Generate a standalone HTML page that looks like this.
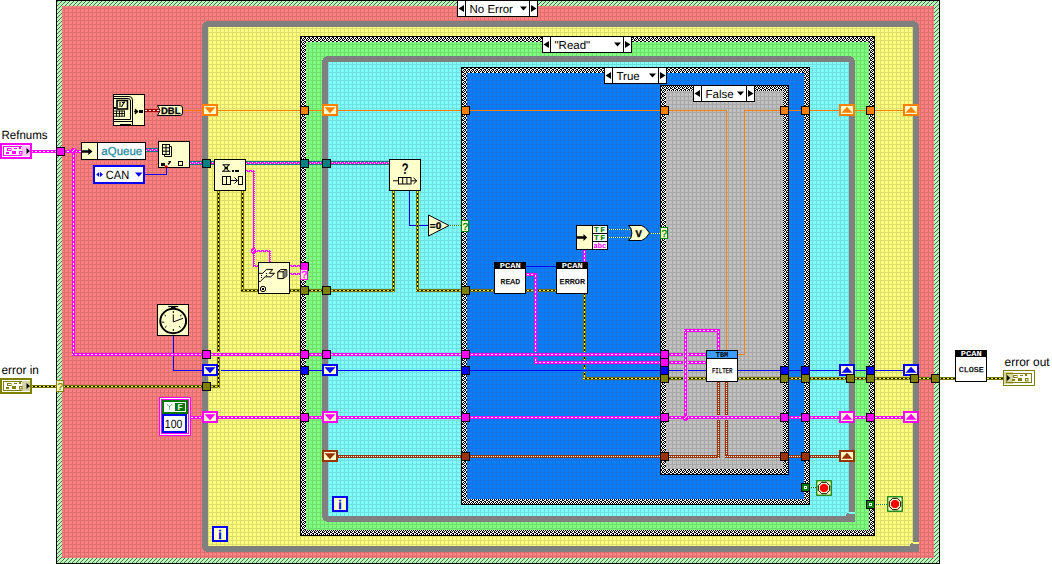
<!DOCTYPE html>
<html lang="en"><head><meta charset="utf-8"><title>Block Diagram</title>
<style>
html,body{margin:0;padding:0;background:#fff;}
body{width:1052px;height:564px;overflow:hidden;font-family:"Liberation Sans",sans-serif;}
svg{display:block;}
</style></head><body>
<svg width="1052" height="564" viewBox="0 0 1052 564" shape-rendering="crispEdges" text-rendering="geometricPrecision">
<defs>
<pattern id="g_red" width="4" height="4" patternUnits="userSpaceOnUse"><rect width="4" height="4" fill="#ff8080"/><rect width="1" height="4" fill="#de6f6f"/><rect width="4" height="1" fill="#de6f6f"/></pattern>
<pattern id="g_yel" width="4" height="4" patternUnits="userSpaceOnUse"><rect width="4" height="4" fill="#ffff80"/><rect width="1" height="4" fill="#dede6f"/><rect width="4" height="1" fill="#dede6f"/></pattern>
<pattern id="g_grn" width="4" height="4" patternUnits="userSpaceOnUse"><rect width="4" height="4" fill="#80ff80"/><rect width="1" height="4" fill="#6fde6f"/><rect width="4" height="1" fill="#6fde6f"/></pattern>
<pattern id="g_cyn" width="4" height="4" patternUnits="userSpaceOnUse"><rect width="4" height="4" fill="#80ffff"/><rect width="1" height="4" fill="#6fdede"/><rect width="4" height="1" fill="#6fdede"/></pattern>
<pattern id="g_blu" width="4" height="4" patternUnits="userSpaceOnUse"><rect width="4" height="4" fill="#0080ff"/><rect width="1" height="4" fill="#1c70e0"/><rect width="4" height="1" fill="#1c70e0"/></pattern>
<pattern id="g_gry" width="4" height="4" patternUnits="userSpaceOnUse"><rect width="4" height="4" fill="#c0c0c0"/><rect width="1" height="4" fill="#a8a8a8"/><rect width="4" height="1" fill="#a8a8a8"/></pattern>
<pattern id="chk" width="4" height="4" patternUnits="userSpaceOnUse" x="1" y="1"><rect width="4" height="4" fill="#000"/><rect x="1" y="0" width="2" height="1" fill="#fff"/><rect x="1" y="1" width="1" height="1" fill="#fff"/><rect x="3" y="1" width="1" height="1" fill="#fff"/><rect x="0" y="2" width="1" height="1" fill="#fff"/><rect x="2" y="2" width="1" height="1" fill="#fff"/><rect x="0" y="3" width="1" height="1" fill="#fff"/><rect x="3" y="3" width="1" height="1" fill="#fff"/></pattern>
<pattern id="hatch" width="4" height="4" patternUnits="userSpaceOnUse"><rect width="4" height="4" fill="#b4ffb4"/><rect x="0" y="2" width="1" height="1" fill="#5e5e66"/><rect x="1" y="1" width="1" height="1" fill="#5e5e66"/><rect x="2" y="0" width="1" height="1" fill="#5e5e66"/><rect x="3" y="3" width="1" height="1" fill="#5e5e66"/></pattern>
</defs>
<rect width="1052" height="564" fill="#fff"/>
<rect x="56" y="0" width="884" height="564" fill="#000" />
<rect x="57" y="1" width="882" height="562" fill="url(#hatch)" />
<rect x="62" y="6" width="872" height="552" fill="url(#g_red)" />
<path d="M206 21H915V22H917V23H918V25H919V552H206V551H204V550H203V548H202V25H203V23H204V22H206Z" fill="#808080"/>
<rect x="208" y="27" width="705" height="519" fill="url(#g_yel)" />
<rect x="911" y="542" width="8" height="2" fill="#ffff80" />
<rect x="910" y="544" width="3" height="3" fill="#808080" />
<rect x="911" y="543" width="2" height="1" fill="#808080" />
<rect x="300" y="36" width="575" height="500" fill="#000" />
<rect x="301" y="37" width="573" height="498" fill="url(#chk)" />
<rect x="306" y="42" width="563" height="488" fill="url(#g_grn)" />
<path d="M326 56H851V57H853V58H854V60H855V522H326V521H324V520H323V518H322V60H323V58H324V57H326Z" fill="#808080"/>
<rect x="328" y="62" width="521" height="454" fill="url(#g_cyn)" />
<rect x="847" y="512" width="8" height="2" fill="#80ffff" />
<rect x="846" y="514" width="3" height="3" fill="#808080" />
<rect x="847" y="513" width="2" height="1" fill="#808080" />
<rect x="461" y="67" width="349" height="438" fill="#000" />
<rect x="462" y="68" width="347" height="436" fill="url(#chk)" />
<rect x="467" y="73" width="337" height="426" fill="url(#g_blu)" />
<rect x="660" y="85" width="129" height="390" fill="#000" />
<rect x="661" y="86" width="127" height="388" fill="url(#chk)" />
<rect x="666" y="91" width="117" height="378" fill="url(#g_gry)" />
<rect x="183" y="110" width="544" height="1" fill="#ff8000" />
<rect x="726" y="110" width="1" height="241" fill="#ff8000" />
<rect x="744" y="110" width="167" height="1" fill="#ff8000" />
<rect x="744" y="110" width="1" height="245" fill="#ff8000" />
<rect x="738" y="354" width="7" height="1" fill="#ff8000" />
<rect x="145" y="109" width="14" height="3" fill="#aa0000" />
<path d="M145 110.5H159" stroke="#fff" stroke-width="1" stroke-dasharray="2 2" fill="none"/>
<rect x="146" y="148" width="12" height="4" fill="#008080" />
<rect x="146" y="149" width="12" height="2" fill="#ff00ff" />
<path d="M146 149.5H158" stroke="#fff" stroke-width="1" stroke-dasharray="1 3" stroke-dashoffset="2" fill="none"/>
<path d="M146 150.5H158" stroke="#fff" stroke-width="1" stroke-dasharray="1 3" stroke-dashoffset="0" fill="none"/>
<rect x="190" y="161" width="24" height="4" fill="#008080" />
<rect x="190" y="162" width="24" height="2" fill="#ff00ff" />
<path d="M190 162.5H214" stroke="#fff" stroke-width="1" stroke-dasharray="1 3" stroke-dashoffset="2" fill="none"/>
<path d="M190 163.5H214" stroke="#fff" stroke-width="1" stroke-dasharray="1 3" stroke-dashoffset="0" fill="none"/>
<rect x="246" y="161" width="143" height="4" fill="#008080" />
<rect x="246" y="162" width="143" height="2" fill="#ff00ff" />
<path d="M246 162.5H389" stroke="#fff" stroke-width="1" stroke-dasharray="1 3" stroke-dashoffset="2" fill="none"/>
<path d="M246 163.5H389" stroke="#fff" stroke-width="1" stroke-dasharray="1 3" stroke-dashoffset="0" fill="none"/>
<rect x="145" y="174" width="22" height="1" fill="#0000ff" />
<rect x="166" y="168" width="1" height="7" fill="#0000ff" />
<rect x="245" y="170" width="10" height="2" fill="#ff00ff" />
<path d="M245 170.5H255" stroke="#fff" stroke-width="1" stroke-dasharray="1 3" stroke-dashoffset="1" fill="none"/>
<path d="M245 171.5H255" stroke="#fff" stroke-width="1" stroke-dasharray="1 3" stroke-dashoffset="3" fill="none"/>
<rect x="253" y="170" width="2" height="97" fill="#ff00ff" />
<path d="M254.5 170V267" stroke="#fff" stroke-width="1" stroke-dasharray="1 1" stroke-dashoffset="0" fill="none"/>
<rect x="253" y="265" width="6" height="2" fill="#ff00ff" />
<path d="M253 265.5H259" stroke="#fff" stroke-width="1" stroke-dasharray="1 3" stroke-dashoffset="1" fill="none"/>
<path d="M253 266.5H259" stroke="#fff" stroke-width="1" stroke-dasharray="1 3" stroke-dashoffset="3" fill="none"/>
<rect x="253" y="250" width="18" height="2" fill="#ff00ff" />
<path d="M253 250.5H271" stroke="#fff" stroke-width="1" stroke-dasharray="1 3" stroke-dashoffset="1" fill="none"/>
<path d="M253 251.5H271" stroke="#fff" stroke-width="1" stroke-dasharray="1 3" stroke-dashoffset="3" fill="none"/>
<rect x="269" y="250" width="2" height="13" fill="#ff00ff" />
<path d="M270.5 250V263" stroke="#fff" stroke-width="1" stroke-dasharray="1 1" stroke-dashoffset="0" fill="none"/>
<rect x="289" y="265" width="13" height="2" fill="#ff00ff" />
<path d="M289 265.5H302" stroke="#fff" stroke-width="1" stroke-dasharray="1 3" stroke-dashoffset="1" fill="none"/>
<path d="M289 266.5H302" stroke="#fff" stroke-width="1" stroke-dasharray="1 3" stroke-dashoffset="3" fill="none"/>
<rect x="289" y="273" width="13" height="2" fill="#ff00ff" />
<path d="M289 273.5H302" stroke="#fff" stroke-width="1" stroke-dasharray="1 3" stroke-dashoffset="1" fill="none"/>
<path d="M289 274.5H302" stroke="#fff" stroke-width="1" stroke-dasharray="1 3" stroke-dashoffset="3" fill="none"/>
<rect x="173" y="336" width="1" height="35" fill="#0000ff" />
<rect x="173" y="370" width="31" height="1" fill="#0000ff" />
<rect x="221" y="370" width="462" height="1" fill="#0000ff" />
<rect x="688" y="370" width="19" height="1" fill="#0000ff" />
<rect x="738" y="370" width="173" height="1" fill="#0000ff" />
<rect x="409" y="191" width="1" height="35" fill="#0000ff" />
<rect x="409" y="225" width="20" height="1" fill="#0000ff" />
<rect x="526" y="266" width="31" height="1" fill="#0000ff" />
<rect x="31" y="385" width="189" height="3" fill="#747400" />
<rect x="31" y="386" width="189" height="1" fill="#ffff00" />
<path d="M31 386.5H220" stroke="#000" stroke-width="1" stroke-dasharray="2 2" stroke-dashoffset="2" fill="none"/>
<rect x="217" y="190" width="3" height="162" fill="#747400" />
<rect x="218" y="190" width="1" height="162" fill="#ffff00" />
<path d="M218.5 190V352" stroke="#000" stroke-width="1" stroke-dasharray="2 2" stroke-dashoffset="1" fill="none"/>
<rect x="217" y="357" width="3" height="31" fill="#747400" />
<rect x="218" y="357" width="1" height="31" fill="#ffff00" />
<path d="M218.5 357V388" stroke="#000" stroke-width="1" stroke-dasharray="2 2" stroke-dashoffset="0" fill="none"/>
<rect x="241" y="190" width="3" height="102" fill="#747400" />
<rect x="242" y="190" width="1" height="102" fill="#ffff00" />
<path d="M242.5 190V292" stroke="#000" stroke-width="1" stroke-dasharray="2 2" stroke-dashoffset="1" fill="none"/>
<rect x="241" y="289" width="19" height="3" fill="#747400" />
<rect x="241" y="290" width="19" height="1" fill="#ffff00" />
<path d="M241 290.5H260" stroke="#000" stroke-width="1" stroke-dasharray="2 2" stroke-dashoffset="0" fill="none"/>
<rect x="289" y="289" width="106" height="3" fill="#747400" />
<rect x="289" y="290" width="106" height="1" fill="#ffff00" />
<path d="M289 290.5H395" stroke="#000" stroke-width="1" stroke-dasharray="2 2" stroke-dashoffset="0" fill="none"/>
<rect x="392" y="190" width="3" height="102" fill="#747400" />
<rect x="393" y="190" width="1" height="102" fill="#ffff00" />
<path d="M393.5 190V292" stroke="#000" stroke-width="1" stroke-dasharray="2 2" stroke-dashoffset="1" fill="none"/>
<rect x="416" y="190" width="3" height="102" fill="#747400" />
<rect x="417" y="190" width="1" height="102" fill="#ffff00" />
<path d="M417.5 190V292" stroke="#000" stroke-width="1" stroke-dasharray="2 2" stroke-dashoffset="1" fill="none"/>
<rect x="416" y="289" width="80" height="3" fill="#747400" />
<rect x="416" y="290" width="80" height="1" fill="#ffff00" />
<path d="M416 290.5H496" stroke="#000" stroke-width="1" stroke-dasharray="2 2" stroke-dashoffset="3" fill="none"/>
<rect x="525" y="289" width="8" height="3" fill="#747400" />
<rect x="525" y="290" width="8" height="1" fill="#ffff00" />
<path d="M525 290.5H533" stroke="#000" stroke-width="1" stroke-dasharray="2 2" stroke-dashoffset="0" fill="none"/>
<rect x="538" y="289" width="20" height="3" fill="#747400" />
<rect x="538" y="290" width="20" height="1" fill="#ffff00" />
<path d="M538 290.5H558" stroke="#000" stroke-width="1" stroke-dasharray="2 2" stroke-dashoffset="1" fill="none"/>
<rect x="583" y="293" width="3" height="59" fill="#747400" />
<rect x="584" y="293" width="1" height="59" fill="#ffff00" />
<path d="M584.5 293V352" stroke="#000" stroke-width="1" stroke-dasharray="2 2" stroke-dashoffset="0" fill="none"/>
<rect x="583" y="357" width="3" height="3" fill="#747400" />
<rect x="584" y="357" width="1" height="3" fill="#ffff00" />
<path d="M584.5 357V360" stroke="#000" stroke-width="1" stroke-dasharray="2 2" stroke-dashoffset="0" fill="none"/>
<rect x="583" y="365" width="3" height="4" fill="#747400" />
<rect x="584" y="365" width="1" height="4" fill="#ffff00" />
<path d="M584.5 365V369" stroke="#000" stroke-width="1" stroke-dasharray="2 2" stroke-dashoffset="0" fill="none"/>
<rect x="583" y="372" width="3" height="8" fill="#747400" />
<rect x="584" y="372" width="1" height="8" fill="#ffff00" />
<path d="M584.5 372V380" stroke="#000" stroke-width="1" stroke-dasharray="2 2" stroke-dashoffset="3" fill="none"/>
<rect x="583" y="377" width="100" height="3" fill="#747400" />
<rect x="583" y="378" width="100" height="1" fill="#ffff00" />
<path d="M583 378.5H683" stroke="#000" stroke-width="1" stroke-dasharray="2 2" stroke-dashoffset="2" fill="none"/>
<rect x="688" y="377" width="20" height="3" fill="#747400" />
<rect x="688" y="378" width="20" height="1" fill="#ffff00" />
<path d="M688 378.5H708" stroke="#000" stroke-width="1" stroke-dasharray="2 2" stroke-dashoffset="3" fill="none"/>
<rect x="737" y="377" width="220" height="3" fill="#747400" />
<rect x="737" y="378" width="220" height="1" fill="#ffff00" />
<path d="M737 378.5H957" stroke="#000" stroke-width="1" stroke-dasharray="2 2" stroke-dashoffset="0" fill="none"/>
<rect x="986" y="377" width="19" height="3" fill="#747400" />
<rect x="986" y="378" width="19" height="1" fill="#ffff00" />
<path d="M986 378.5H1005" stroke="#000" stroke-width="1" stroke-dasharray="2 2" stroke-dashoffset="1" fill="none"/>
<rect x="337" y="455" width="383" height="3" fill="#993300" />
<rect x="337" y="456" width="383" height="1" fill="#993300" />
<path d="M337 456.5H720" stroke="#fff" stroke-width="1" stroke-dasharray="1 1" stroke-dashoffset="0" fill="none"/>
<rect x="717" y="381" width="3" height="34" fill="#993300" />
<rect x="718" y="381" width="1" height="34" fill="#993300" />
<path d="M718.5 381V415" stroke="#fff" stroke-width="1" stroke-dasharray="1 1" stroke-dashoffset="0" fill="none"/>
<rect x="717" y="420" width="3" height="38" fill="#993300" />
<rect x="718" y="420" width="1" height="38" fill="#993300" />
<path d="M718.5 420V458" stroke="#fff" stroke-width="1" stroke-dasharray="1 1" stroke-dashoffset="1" fill="none"/>
<rect x="725" y="381" width="3" height="34" fill="#993300" />
<rect x="726" y="381" width="1" height="34" fill="#993300" />
<path d="M726.5 381V415" stroke="#fff" stroke-width="1" stroke-dasharray="1 1" stroke-dashoffset="0" fill="none"/>
<rect x="725" y="420" width="3" height="38" fill="#993300" />
<rect x="726" y="420" width="1" height="38" fill="#993300" />
<path d="M726.5 420V458" stroke="#fff" stroke-width="1" stroke-dasharray="1 1" stroke-dashoffset="1" fill="none"/>
<rect x="725" y="455" width="117" height="3" fill="#993300" />
<rect x="725" y="456" width="117" height="1" fill="#993300" />
<path d="M725 456.5H842" stroke="#fff" stroke-width="1" stroke-dasharray="1 1" stroke-dashoffset="0" fill="none"/>
<rect x="31" y="150" width="27" height="3" fill="#ff00ff" />
<rect x="31" y="151" width="27" height="1" fill="#ff00ff" />
<path d="M31 151.5H58" stroke="#fff" stroke-width="1" stroke-dasharray="2 2" stroke-dashoffset="0" fill="none"/>
<rect x="64" y="150" width="19" height="3" fill="#ff00ff" />
<rect x="64" y="151" width="19" height="1" fill="#ff00ff" />
<path d="M64 151.5H83" stroke="#fff" stroke-width="1" stroke-dasharray="2 2" stroke-dashoffset="1" fill="none"/>
<rect x="72" y="150" width="3" height="206" fill="#ff00ff" />
<rect x="73" y="150" width="1" height="206" fill="#ff00ff" />
<path d="M73.5 150V356" stroke="#fff" stroke-width="1" stroke-dasharray="2 2" stroke-dashoffset="3" fill="none"/>
<rect x="72" y="353" width="611" height="3" fill="#ff00ff" />
<rect x="72" y="354" width="611" height="1" fill="#ff00ff" />
<path d="M72 354.5H683" stroke="#fff" stroke-width="1" stroke-dasharray="2 2" stroke-dashoffset="1" fill="none"/>
<rect x="688" y="353" width="20" height="3" fill="#ff00ff" />
<rect x="688" y="354" width="20" height="1" fill="#ff00ff" />
<path d="M688 354.5H708" stroke="#fff" stroke-width="1" stroke-dasharray="2 2" stroke-dashoffset="1" fill="none"/>
<rect x="525" y="273" width="12" height="3" fill="#ff00ff" />
<rect x="525" y="274" width="12" height="1" fill="#ff00ff" />
<path d="M525 274.5H537" stroke="#fff" stroke-width="1" stroke-dasharray="2 2" stroke-dashoffset="2" fill="none"/>
<rect x="534" y="273" width="3" height="79" fill="#ff00ff" />
<rect x="535" y="273" width="1" height="79" fill="#ff00ff" />
<path d="M535.5 273V352" stroke="#fff" stroke-width="1" stroke-dasharray="2 2" stroke-dashoffset="2" fill="none"/>
<rect x="534" y="357" width="3" height="7" fill="#ff00ff" />
<rect x="535" y="357" width="1" height="7" fill="#ff00ff" />
<path d="M535.5 357V364" stroke="#fff" stroke-width="1" stroke-dasharray="2 2" stroke-dashoffset="2" fill="none"/>
<rect x="534" y="361" width="149" height="3" fill="#ff00ff" />
<rect x="534" y="362" width="149" height="1" fill="#ff00ff" />
<path d="M534 362.5H683" stroke="#fff" stroke-width="1" stroke-dasharray="2 2" stroke-dashoffset="3" fill="none"/>
<rect x="688" y="361" width="20" height="3" fill="#ff00ff" />
<rect x="688" y="362" width="20" height="1" fill="#ff00ff" />
<path d="M688 362.5H708" stroke="#fff" stroke-width="1" stroke-dasharray="2 2" stroke-dashoffset="1" fill="none"/>
<rect x="583" y="249" width="3" height="15" fill="#ff00ff" />
<rect x="584" y="249" width="1" height="15" fill="#ff00ff" />
<path d="M584.5 249V264" stroke="#fff" stroke-width="1" stroke-dasharray="2 2" stroke-dashoffset="2" fill="none"/>
<rect x="684" y="329" width="3" height="90" fill="#ff00ff" />
<rect x="685" y="329" width="1" height="90" fill="#ff00ff" />
<path d="M685.5 329V419" stroke="#fff" stroke-width="1" stroke-dasharray="2 2" stroke-dashoffset="2" fill="none"/>
<rect x="684" y="329" width="36" height="3" fill="#ff00ff" />
<rect x="684" y="330" width="36" height="1" fill="#ff00ff" />
<path d="M684 330.5H720" stroke="#fff" stroke-width="1" stroke-dasharray="2 2" stroke-dashoffset="1" fill="none"/>
<rect x="717" y="329" width="3" height="23" fill="#ff00ff" />
<rect x="718" y="329" width="1" height="23" fill="#ff00ff" />
<path d="M718.5 329V352" stroke="#fff" stroke-width="1" stroke-dasharray="2 2" stroke-dashoffset="2" fill="none"/>
<rect x="190" y="416" width="722" height="3" fill="#ff00ff" />
<rect x="190" y="417" width="722" height="1" fill="#ff00ff" />
<path d="M190 417.5H912" stroke="#fff" stroke-width="1" stroke-dasharray="2 2" stroke-dashoffset="3" fill="none"/>
<path d="M449.5 225.5 L461.5 225.5" fill="none" stroke="#f4fff4" stroke-width="1" />
<path d="M449.5 225.5 L461.5 225.5" fill="none" stroke="#007f00" stroke-width="1" stroke-dasharray="1 1" />
<path d="M607.5 229.5 L631.5 229.5" fill="none" stroke="#f4fff4" stroke-width="1" />
<path d="M607.5 229.5 L631.5 229.5" fill="none" stroke="#007f00" stroke-width="1" stroke-dasharray="1 1" />
<path d="M607.5 237.5 L631.5 237.5" fill="none" stroke="#f4fff4" stroke-width="1" />
<path d="M607.5 237.5 L631.5 237.5" fill="none" stroke="#007f00" stroke-width="1" stroke-dasharray="1 1" />
<path d="M649.5 233.5 L661.5 233.5" fill="none" stroke="#f4fff4" stroke-width="1" />
<path d="M649.5 233.5 L661.5 233.5" fill="none" stroke="#007f00" stroke-width="1" stroke-dasharray="1 1" />
<path d="M810.5 487.5 L816.5 487.5" fill="none" stroke="#f4fff4" stroke-width="1" />
<path d="M810.5 487.5 L816.5 487.5" fill="none" stroke="#007f00" stroke-width="1" stroke-dasharray="1 1" />
<path d="M875.5 504.5 L887.5 504.5" fill="none" stroke="#f4fff4" stroke-width="1" />
<path d="M875.5 504.5 L887.5 504.5" fill="none" stroke="#007f00" stroke-width="1" stroke-dasharray="1 1" />
<rect x="72" y="148" width="3" height="1" fill="#ff00ff" />
<rect x="71" y="149" width="5" height="4" fill="#ff00ff" />
<rect x="72" y="153" width="3" height="1" fill="#ff00ff" />
<rect x="72" y="151" width="1" height="1" fill="#fff" />
<rect x="73" y="150" width="1" height="1" fill="#fff" />
<rect x="74" y="149" width="1" height="1" fill="#fff" />
<rect x="252" y="248" width="3" height="1" fill="#ff00ff" />
<rect x="251" y="249" width="5" height="4" fill="#ff00ff" />
<rect x="252" y="253" width="3" height="1" fill="#ff00ff" />
<rect x="252" y="251" width="1" height="1" fill="#fff" />
<rect x="253" y="250" width="1" height="1" fill="#fff" />
<rect x="254" y="249" width="1" height="1" fill="#fff" />
<rect x="684" y="415" width="3" height="1" fill="#ff00ff" />
<rect x="683" y="416" width="5" height="4" fill="#ff00ff" />
<rect x="684" y="420" width="3" height="1" fill="#ff00ff" />
<rect x="684" y="418" width="1" height="1" fill="#fff" />
<rect x="685" y="417" width="1" height="1" fill="#fff" />
<rect x="686" y="416" width="1" height="1" fill="#fff" />
<rect x="300.5" y="106.5" width="8" height="8" fill="#ff8000" stroke="#000" stroke-width="1" />
<rect x="461.5" y="106.5" width="8" height="8" fill="#ff8000" stroke="#000" stroke-width="1" />
<rect x="660.5" y="106.5" width="8" height="8" fill="#ff8000" stroke="#000" stroke-width="1" />
<rect x="780.5" y="106.5" width="8" height="8" fill="#ff8000" stroke="#000" stroke-width="1" />
<rect x="801.5" y="106.5" width="8" height="8" fill="#ff8000" stroke="#000" stroke-width="1" />
<rect x="866.5" y="106.5" width="8" height="8" fill="#ff8000" stroke="#000" stroke-width="1" />
<rect x="202" y="104" width="16" height="12" fill="#ff8000" />
<rect x="204" y="106" width="12" height="8" fill="#ffffcc" />
<path d="M204.5 107.3H215.5L210.0 113.3Z" fill="#ff8000" shape-rendering="auto"/>
<rect x="322" y="104" width="16" height="12" fill="#ff8000" />
<rect x="324" y="106" width="12" height="8" fill="#ffffcc" />
<path d="M324.5 107.3H335.5L330.0 113.3Z" fill="#ff8000" shape-rendering="auto"/>
<rect x="839" y="104" width="16" height="12" fill="#ff8000" />
<rect x="841" y="106" width="12" height="8" fill="#ffffcc" />
<path d="M841.5 112.7H852.5L847.0 106.7Z" fill="#ff8000" shape-rendering="auto"/>
<rect x="903" y="104" width="16" height="12" fill="#ff8000" />
<rect x="905" y="106" width="12" height="8" fill="#ffffcc" />
<path d="M905.5 112.7H916.5L911.0 106.7Z" fill="#ff8000" shape-rendering="auto"/>
<rect x="202.5" y="159.5" width="8" height="8" fill="#008080" stroke="#000" stroke-width="1" />
<rect x="300.5" y="159.5" width="8" height="8" fill="#008080" stroke="#000" stroke-width="1" />
<rect x="322.5" y="159.5" width="8" height="8" fill="#008080" stroke="#000" stroke-width="1" />
<rect x="56.5" y="147.5" width="8" height="8" fill="#ff00ff" stroke="#000" stroke-width="1" />
<rect x="202.5" y="350.5" width="8" height="8" fill="#ff00ff" stroke="#000" stroke-width="1" />
<rect x="300.5" y="350.5" width="8" height="8" fill="#ff00ff" stroke="#000" stroke-width="1" />
<rect x="322.5" y="350.5" width="8" height="8" fill="#ff00ff" stroke="#000" stroke-width="1" />
<rect x="461.5" y="350.5" width="8" height="8" fill="#ff00ff" stroke="#000" stroke-width="1" />
<rect x="660.5" y="350.5" width="8" height="8" fill="#ff00ff" stroke="#000" stroke-width="1" />
<rect x="660.5" y="358.5" width="8" height="8" fill="#ff00ff" stroke="#000" stroke-width="1" />
<rect x="202" y="364" width="16" height="12" fill="#0000ff" />
<rect x="204" y="366" width="12" height="8" fill="#ffffcc" />
<path d="M204.5 367.3H215.5L210.0 373.3Z" fill="#0000ff" shape-rendering="auto"/>
<rect x="322" y="364" width="16" height="12" fill="#0000ff" />
<rect x="324" y="366" width="12" height="8" fill="#ffffcc" />
<path d="M324.5 367.3H335.5L330.0 373.3Z" fill="#0000ff" shape-rendering="auto"/>
<rect x="839" y="364" width="16" height="12" fill="#0000ff" />
<rect x="841" y="366" width="12" height="8" fill="#ffffcc" />
<path d="M841.5 372.7H852.5L847.0 366.7Z" fill="#0000ff" shape-rendering="auto"/>
<rect x="903" y="364" width="16" height="12" fill="#0000ff" />
<rect x="905" y="366" width="12" height="8" fill="#ffffcc" />
<path d="M905.5 372.7H916.5L911.0 366.7Z" fill="#0000ff" shape-rendering="auto"/>
<rect x="300.5" y="366.5" width="8" height="8" fill="#0000ff" stroke="#000" stroke-width="1" />
<rect x="461.5" y="366.5" width="8" height="8" fill="#0000ff" stroke="#000" stroke-width="1" />
<rect x="660.5" y="366.5" width="8" height="8" fill="#0000ff" stroke="#000" stroke-width="1" />
<rect x="780.5" y="366.5" width="8" height="8" fill="#0000ff" stroke="#000" stroke-width="1" />
<rect x="801.5" y="366.5" width="8" height="8" fill="#0000ff" stroke="#000" stroke-width="1" />
<rect x="866.5" y="366.5" width="8" height="8" fill="#0000ff" stroke="#000" stroke-width="1" />
<rect x="202.5" y="382.5" width="8" height="8" fill="#808000" stroke="#000" stroke-width="1" />
<rect x="300.5" y="286.5" width="8" height="8" fill="#808000" stroke="#000" stroke-width="1" />
<rect x="322.5" y="286.5" width="8" height="8" fill="#808000" stroke="#000" stroke-width="1" />
<rect x="461.5" y="286.5" width="8" height="8" fill="#808000" stroke="#000" stroke-width="1" />
<rect x="660.5" y="374.5" width="8" height="8" fill="#808000" stroke="#000" stroke-width="1" />
<rect x="780.5" y="374.5" width="8" height="8" fill="#808000" stroke="#000" stroke-width="1" />
<rect x="801.5" y="374.5" width="8" height="8" fill="#808000" stroke="#000" stroke-width="1" />
<rect x="846.5" y="374.5" width="8" height="8" fill="#808000" stroke="#000" stroke-width="1" />
<rect x="866.5" y="374.5" width="8" height="8" fill="#808000" stroke="#000" stroke-width="1" />
<rect x="910.5" y="374.5" width="8" height="8" fill="#808000" stroke="#000" stroke-width="1" />
<rect x="931.5" y="374.5" width="8" height="8" fill="#808000" stroke="#000" stroke-width="1" />
<rect x="300.5" y="413.5" width="8" height="8" fill="#ff00ff" stroke="#000" stroke-width="1" />
<rect x="461.5" y="413.5" width="8" height="8" fill="#ff00ff" stroke="#000" stroke-width="1" />
<rect x="660.5" y="413.5" width="8" height="8" fill="#ff00ff" stroke="#000" stroke-width="1" />
<rect x="780.5" y="413.5" width="8" height="8" fill="#ff00ff" stroke="#000" stroke-width="1" />
<rect x="801.5" y="413.5" width="8" height="8" fill="#ff00ff" stroke="#000" stroke-width="1" />
<rect x="866.5" y="413.5" width="8" height="8" fill="#ff00ff" stroke="#000" stroke-width="1" />
<rect x="202" y="411" width="16" height="12" fill="#ff00ff" />
<rect x="204" y="413" width="12" height="8" fill="#ffffcc" />
<path d="M204.5 414.3H215.5L210.0 420.3Z" fill="#ff00ff" shape-rendering="auto"/>
<rect x="322" y="411" width="16" height="12" fill="#ff00ff" />
<rect x="324" y="413" width="12" height="8" fill="#ffffcc" />
<path d="M324.5 414.3H335.5L330.0 420.3Z" fill="#ff00ff" shape-rendering="auto"/>
<rect x="839" y="411" width="16" height="12" fill="#ff00ff" />
<rect x="841" y="413" width="12" height="8" fill="#ffffcc" />
<path d="M841.5 419.7H852.5L847.0 413.7Z" fill="#ff00ff" shape-rendering="auto"/>
<rect x="903" y="411" width="16" height="12" fill="#ff00ff" />
<rect x="905" y="413" width="12" height="8" fill="#ffffcc" />
<path d="M905.5 419.7H916.5L911.0 413.7Z" fill="#ff00ff" shape-rendering="auto"/>
<rect x="461.5" y="452.5" width="8" height="8" fill="#993300" stroke="#000" stroke-width="1" />
<rect x="660.5" y="452.5" width="8" height="8" fill="#993300" stroke="#000" stroke-width="1" />
<rect x="780.5" y="452.5" width="8" height="8" fill="#993300" stroke="#000" stroke-width="1" />
<rect x="801.5" y="452.5" width="8" height="8" fill="#993300" stroke="#000" stroke-width="1" />
<rect x="322" y="450" width="16" height="12" fill="#993300" />
<rect x="324" y="452" width="12" height="8" fill="#ffffcc" />
<path d="M324.5 453.3H335.5L330.0 459.3Z" fill="#993300" shape-rendering="auto"/>
<rect x="839" y="450" width="16" height="12" fill="#993300" />
<rect x="841" y="452" width="12" height="8" fill="#ffffcc" />
<path d="M841.5 458.7H852.5L847.0 452.7Z" fill="#993300" shape-rendering="auto"/>
<rect x="300.5" y="262.5" width="8" height="8" fill="#ff00ff" stroke="#000" stroke-width="1" />
<rect x="801.5" y="483.5" width="8" height="8" fill="#008000" stroke="#000" stroke-width="1" />
<rect x="804" y="486" width="3" height="3" fill="#fff" />
<rect x="805" y="487" width="1" height="1" fill="#008000" />
<rect x="866.5" y="500.5" width="8" height="8" fill="#008000" stroke="#000" stroke-width="1" />
<rect x="869" y="503" width="3" height="3" fill="#fff" />
<rect x="870" y="504" width="1" height="1" fill="#008000" />
<rect x="56.5" y="380.5" width="7" height="11" fill="#ffffcc" stroke="#808000" stroke-width="1" />
<text x="60.2" y="389.8" font-size="10" fill="#808000" text-anchor="middle" font-weight="normal" font-family="'Liberation Sans', sans-serif" stroke="#808000" stroke-width="0.3">?</text>
<rect x="300.5" y="269.5" width="7" height="10" fill="#ffffcc" stroke="#ff00ff" stroke-width="1" />
<text x="304.2" y="277.8" font-size="10" fill="#ff00ff" text-anchor="middle" font-weight="normal" font-family="'Liberation Sans', sans-serif" stroke="#ff00ff" stroke-width="0.3">?</text>
<rect x="461.5" y="220.5" width="7" height="11" fill="#ffffcc" stroke="#007f00" stroke-width="1" />
<text x="465.2" y="229.8" font-size="10" fill="#007f00" text-anchor="middle" font-weight="normal" font-family="'Liberation Sans', sans-serif" stroke="#007f00" stroke-width="0.3">?</text>
<rect x="660.5" y="227.5" width="7" height="11" fill="#ffffcc" stroke="#007f00" stroke-width="1" />
<text x="664.2" y="236.8" font-size="10" fill="#007f00" text-anchor="middle" font-weight="normal" font-family="'Liberation Sans', sans-serif" stroke="#007f00" stroke-width="0.3">?</text>
<rect x="457.5" y="0.5" width="80" height="16" fill="#fff" stroke="#000" stroke-width="1" />
<path d="M465.5 0V17M529.5 0V17" stroke="#000" stroke-width="1" fill="none"/>
<path d="M458.5 8.5L464 5.0V12.0Z" fill="#000" shape-rendering="auto"/>
<path d="M536.5 8.5L531 5.0V12.0Z" fill="#000" shape-rendering="auto"/>
<path d="M520 6.5h7l-3.5 4Z" fill="#000" shape-rendering="auto"/>
<text x="469.5" y="13" font-size="11.5" fill="#000" text-anchor="start" font-weight="normal" font-family="'Liberation Sans', sans-serif" >No Error</text>
<rect x="542.5" y="36.5" width="89" height="16" fill="#fff" stroke="#000" stroke-width="1" />
<path d="M550.5 36V53M623.5 36V53" stroke="#000" stroke-width="1" fill="none"/>
<path d="M543.5 44.5L549 41.0V48.0Z" fill="#000" shape-rendering="auto"/>
<path d="M630.5 44.5L625 41.0V48.0Z" fill="#000" shape-rendering="auto"/>
<path d="M614 42.5h7l-3.5 4Z" fill="#000" shape-rendering="auto"/>
<text x="554.5" y="49" font-size="11.5" fill="#000" text-anchor="start" font-weight="normal" font-family="'Liberation Sans', sans-serif" >&quot;Read&quot;</text>
<rect x="604.5" y="67.5" width="62" height="16" fill="#fff" stroke="#000" stroke-width="1" />
<path d="M612.5 67V84M658.5 67V84" stroke="#000" stroke-width="1" fill="none"/>
<path d="M605.5 75.5L611 72.0V79.0Z" fill="#000" shape-rendering="auto"/>
<path d="M665.5 75.5L660 72.0V79.0Z" fill="#000" shape-rendering="auto"/>
<path d="M649 73.5h7l-3.5 4Z" fill="#000" shape-rendering="auto"/>
<text x="616.5" y="80" font-size="11.5" fill="#000" text-anchor="start" font-weight="normal" font-family="'Liberation Sans', sans-serif" >True</text>
<rect x="693.5" y="85.5" width="61" height="16" fill="#fff" stroke="#000" stroke-width="1" />
<path d="M701.5 85V102M746.5 85V102" stroke="#000" stroke-width="1" fill="none"/>
<path d="M694.5 93.5L700 90.0V97.0Z" fill="#000" shape-rendering="auto"/>
<path d="M753.5 93.5L748 90.0V97.0Z" fill="#000" shape-rendering="auto"/>
<path d="M737 91.5h7l-3.5 4Z" fill="#000" shape-rendering="auto"/>
<text x="705.5" y="98" font-size="11.5" fill="#000" text-anchor="start" font-weight="normal" font-family="'Liberation Sans', sans-serif" >False</text>
<rect x="113.5" y="94.5" width="31" height="31" fill="#ffffcc" stroke="#000" stroke-width="1" />
<g fill="none" stroke="#000" stroke-width="1" shape-rendering="auto"><path d="M113.500 96.500H129Q132.500 96.500 132.500 100V125.500"/><path d="M113.500 98.500H128Q130.500 98.500 130.500 101V119.500H113.500"/><path d="M113.500 121.500H132.500"/><rect x="117" y="100.500" width="10.500" height="8.500" stroke-width="1.600"/><path d="M120 102V107M124.500 101.500L121.500 107M122 102.500H125" stroke-width="1.100"/><path d="M114 111H124.500M114 113.500H124.500M114 116.200H124.500M116.500 110.500V116.500M119.500 110.500V116.500M122 110.500V116.500M124.500 110.500V116.500" stroke-width="0.900"/><path d="M120 124.800H131" stroke-width="1.600"/></g>
<rect x="114" y="107" width="2" height="2" fill="#000" />
<path d="M134 111.500H137M135.200 109L138.200 111.500L135.200 114Z" stroke="#000" fill="#000" stroke-width="0.800" shape-rendering="auto"/>
<rect x="139" y="110" width="4" height="3" fill="#000" />
<path d="M157.500 105.500H180Q182.500 105.500 182.500 108V113Q182.500 115.500 180 115.500H157.500L160 110.500Z" fill="#ffffcc" stroke="#000" shape-rendering="auto"/>
<text x="170.7" y="114.2" font-size="9.5" fill="#000" text-anchor="middle" font-weight="bold" font-family="'Liberation Sans', sans-serif" stroke="#000" stroke-width="0.3">DBL</text>
<text x="1.5" y="138.5" font-size="12" fill="#000" text-anchor="start" font-weight="normal" font-family="'Liberation Sans', sans-serif" textLength="46" lengthAdjust="spacingAndGlyphs">Refnums</text>
<rect x="0" y="143" width="32" height="16" fill="#ff00ff" />
<rect x="2" y="145" width="28" height="12" fill="#fff" />
<rect x="3.5" y="146.5" width="25" height="9" fill="#fff" stroke="#ff00ff" stroke-width="1" />
<rect x="22" y="146" width="8" height="10" fill="#ffc4ff" />
<path d="M26.5 148.0L30 151.0L26.5 154.0Z" fill="#000" shape-rendering="auto"/>
<rect x="7.5" y="148.5" width="3.5" height="2" fill="none" stroke="#ff00ff" stroke-width="1" shape-rendering="auto"/>
<rect x="14" y="148" width="3" height="1" fill="#ff00ff" />
<rect x="19" y="147" width="2" height="2" fill="#ff00ff" />
<rect x="6" y="152" width="3" height="2" fill="#ff00ff" />
<rect x="12" y="151" width="4" height="3" fill="#ff00ff" />
<rect x="19.5" y="151.5" width="2.5" height="2.5" fill="none" stroke="#ff00ff" stroke-width="1" shape-rendering="auto"/>
<rect x="81.5" y="142.5" width="64" height="17" fill="#fff" stroke="#000" stroke-width="1" />
<rect x="82" y="143" width="15" height="16" fill="#ffffcc" />
<rect x="97" y="142" width="1" height="18" fill="#000" />
<path d="M82 150.300H88.300V148L92.500 151.500L88.300 155V152.700H82Z" fill="#000" shape-rendering="auto"/>
<text x="101.3" y="155" font-size="11.5" fill="#1f8a9e" text-anchor="start" font-weight="normal" font-family="'Liberation Sans', sans-serif" stroke="#1f8a9e" stroke-width="0.25">aQueue</text>
<rect x="93" y="165" width="52" height="19" fill="#0000ff" />
<rect x="95" y="167" width="48" height="15" fill="#fff" />
<path d="M96.2 174.500L99.2 172V177ZM103 174.500L100 172V177Z" fill="#0000ff" shape-rendering="auto"/>
<text x="105.8" y="178.8" font-size="12" fill="#000" text-anchor="start" font-weight="normal" font-family="'Liberation Sans', sans-serif" textLength="23.5" lengthAdjust="spacingAndGlyphs">CAN</text>
<path d="M135 172.500H142.500L138.750 176.800Z" fill="#0000ff" shape-rendering="auto"/>
<rect x="158.5" y="141.5" width="31" height="26" fill="#ffffcc" stroke="#000" stroke-width="1" />
<g fill="none" stroke="#000" stroke-width="1" shape-rendering="auto"><rect x="162.500" y="144.500" width="7" height="10"/><path d="M166 144.500V154.500M162.500 147.800H169.500M162.500 151.200H169.500"/><path d="M170 146.500H171.500V156.500H164.500V155"/><rect x="178.500" y="161.500" width="4" height="4"/><path d="M168 164.500L170.500 161.500M168.500 161.500H171" stroke-width="1.2"/></g>
<rect x="161" y="163" width="4" height="3" fill="#000" />
<path d="M163.800 167.500L166.200 164.800L168.600 167.500Z" fill="#e00000" shape-rendering="auto"/>
<rect x="214.5" y="159.5" width="31" height="31" fill="#ffffcc" stroke="#000" stroke-width="1" />
<g fill="none" stroke="#000" stroke-width="1" shape-rendering="auto"><path d="M222.500 164.800H230M222 171.200H230.500" stroke-width="1.100"/><path d="M223.500 165L228.800 171M228.800 165L223.500 171" stroke-width="1.100"/><path d="M224.500 168H228" stroke-width="1.800"/><rect x="222.500" y="176.500" width="8" height="8"/><path d="M226.500 176.500V184.500"/><rect x="238.500" y="176.500" width="4" height="8"/><path d="M231 180.500H237M234.500 177.500L237.500 180.500L234.500 183.500"/></g>
<rect x="232" y="170" width="2" height="2" fill="#000" />
<rect x="234.5" y="170" width="2" height="2" fill="#000" />
<rect x="237" y="170" width="2" height="2" fill="#000" />
<rect x="258.5" y="262.5" width="31" height="31" fill="#ffffcc" stroke="#000" stroke-width="1" />
<g fill="none" stroke="#000" stroke-width="1" shape-rendering="auto"><path d="M259 273.300H262.800L266.400 269.400H272.800L269.300 273.300H274.600L270.700 276.800H265L260.400 281.400H259"/><path d="M277.800 271.800H283.200V278.600H277.800ZM277.800 271.800L280.800 269.500H286.500L283.200 271.800M286.800 269.800V276L283.200 278.600"/><circle cx="263" cy="289" r="2.700"/></g>
<path d="M283.700 272L286.500 270V275.800L283.700 278Z" fill="#777" shape-rendering="auto"/>
<rect x="262" y="288" width="2" height="2" fill="#000" />
<rect x="261" y="275" width="1" height="1" fill="#000" />
<rect x="261" y="277" width="1" height="1" fill="#000" />
<rect x="266" y="273" width="1" height="1" fill="#000" />
<rect x="266" y="275" width="1" height="1" fill="#000" />
<rect x="157.5" y="304.5" width="31" height="31" fill="#ffffcc" stroke="#000" stroke-width="1" />
<g fill="none" stroke="#000" shape-rendering="auto"><ellipse cx="173.200" cy="321" rx="12.900" ry="12.200" stroke-width="2"/><path d="M173.300 322V314.500M173.300 322L183 318.300" stroke-width="1"/><path d="M168.200 306.500H178.200" stroke-width="1.200"/><path d="M171 307.500H175.500" stroke-width="2"/><path d="M173.300 311V313M173.300 329V331M162 322.200H164.200M164.500 315L166 316.200M181.500 315L180 316.200M165 327.500L166.500 326.200M180.500 327.500L179 326.200" stroke-width="1"/></g>
<text x="1.5" y="373.8" font-size="12" fill="#000" text-anchor="start" font-weight="normal" font-family="'Liberation Sans', sans-serif" textLength="37.3" lengthAdjust="spacingAndGlyphs">error in</text>
<rect x="0" y="378" width="32" height="16" fill="#808000" />
<rect x="2" y="380" width="28" height="12" fill="#fff" />
<rect x="3.5" y="381.5" width="25" height="9" fill="#fff" stroke="#808000" stroke-width="1" />
<rect x="22" y="381" width="8" height="10" fill="#d4d4a4" />
<path d="M26.5 383.0L30 386.0L26.5 389.0Z" fill="#000" shape-rendering="auto"/>
<rect x="7.5" y="383.5" width="3.5" height="2" fill="none" stroke="#808000" stroke-width="1" shape-rendering="auto"/>
<rect x="14" y="383" width="3" height="1" fill="#808000" />
<rect x="19" y="382" width="2" height="2" fill="#808000" />
<rect x="6" y="387" width="3" height="2" fill="#808000" />
<rect x="12" y="386" width="4" height="3" fill="#808000" />
<rect x="19.5" y="386.5" width="2.5" height="2.5" fill="none" stroke="#808000" stroke-width="1" shape-rendering="auto"/>
<rect x="159.5" y="397.5" width="31" height="38" fill="#fff" stroke="#ff00ff" stroke-width="1" />
<rect x="161.5" y="399.5" width="27" height="34" fill="#fff" stroke="#ff00ff" stroke-width="1" />
<rect x="162" y="400" width="26" height="14" fill="#007800" />
<rect x="164" y="402" width="22" height="10" fill="#fff" />
<rect x="175" y="403" width="10" height="8" fill="#007800" />
<text x="180" y="410.2" font-size="8.5" fill="#fff" text-anchor="middle" font-weight="bold" font-family="'Liberation Sans', sans-serif" >F</text>
<path d="M167 404.500L169.500 406.500M172 404.500L169.500 406.500M169.500 406.500V410" stroke="#007800" stroke-dasharray="1 1" fill="none" shape-rendering="auto"/>
<rect x="162" y="414" width="25" height="19" fill="#0000ff" />
<rect x="164" y="416" width="21" height="15" fill="#fff" />
<text x="164.8" y="427.8" font-size="12" fill="#000" text-anchor="start" font-weight="normal" font-family="'Liberation Sans', sans-serif" textLength="17.5" lengthAdjust="spacingAndGlyphs">100</text>
<rect x="212" y="526" width="16" height="16" fill="#0000ff" />
<rect x="214" y="528" width="12" height="12" fill="#ffffcc" />
<text x="220" y="539" font-size="12.5" fill="#0000ff" text-anchor="middle" font-weight="bold" font-family="'Liberation Sans', sans-serif" stroke="#0000ff" stroke-width="0.3">i</text>
<rect x="332" y="496" width="16" height="16" fill="#0000ff" />
<rect x="334" y="498" width="12" height="12" fill="#ffffcc" />
<text x="340" y="509" font-size="12.5" fill="#0000ff" text-anchor="middle" font-weight="bold" font-family="'Liberation Sans', sans-serif" stroke="#0000ff" stroke-width="0.3">i</text>
<rect x="389.5" y="159.5" width="31" height="31" fill="#ffffcc" stroke="#000" stroke-width="1" />
<text x="405.2" y="173.8" font-size="15.5" fill="#000" text-anchor="middle" font-weight="bold" font-family="'Liberation Sans', sans-serif" textLength="6.8" lengthAdjust="spacingAndGlyphs">?</text>
<g fill="none" stroke="#000" stroke-width="1" shape-rendering="auto"><rect x="398.500" y="177.500" width="12.500" height="6.500"/><path d="M402.700 177.500V184M406.900 177.500V184"/><path d="M393 180.800H398.500M411 180.800H416.500M413.500 177.800L416.800 180.800L413.500 183.800"/></g>
<path d="M428.500 215L449 225.500L428.500 236Z" fill="#ffffcc" stroke="#000" shape-rendering="auto"/>
<text x="429.8" y="229" font-size="9.5" fill="#000" text-anchor="start" font-weight="bold" font-family="'Liberation Sans', sans-serif" textLength="11.4" lengthAdjust="spacingAndGlyphs" stroke="#000" stroke-width="0.35">=0</text>
<rect x="494.5" y="262.5" width="31" height="31" fill="#fff" stroke="#000" stroke-width="1" />
<rect x="494.5" y="262.5" width="31" height="6" fill="#000" stroke="#000" stroke-width="1" />
<text x="510.2" y="268.2" font-size="7.5" fill="#fff" text-anchor="middle" font-weight="bold" font-family="'Liberation Mono', sans-serif" textLength="21" lengthAdjust="spacingAndGlyphs">PCAN</text>
<text x="510.3" y="284" font-size="7.5" fill="#000" text-anchor="middle" font-weight="normal" font-family="'Liberation Mono', sans-serif" textLength="19.5" lengthAdjust="spacingAndGlyphs" stroke="#000" stroke-width="0.25">READ</text>
<rect x="556.5" y="262.5" width="31" height="31" fill="#fff" stroke="#000" stroke-width="1" />
<rect x="556.5" y="262.5" width="31" height="6" fill="#000" stroke="#000" stroke-width="1" />
<text x="572.2" y="268.2" font-size="7.5" fill="#fff" text-anchor="middle" font-weight="bold" font-family="'Liberation Mono', sans-serif" textLength="21" lengthAdjust="spacingAndGlyphs">PCAN</text>
<text x="572.3" y="284" font-size="7.5" fill="#000" text-anchor="middle" font-weight="normal" font-family="'Liberation Mono', sans-serif" textLength="25.5" lengthAdjust="spacingAndGlyphs" stroke="#000" stroke-width="0.25">ERROR</text>
<rect x="955.5" y="350.5" width="31" height="31" fill="#fff" stroke="#000" stroke-width="1" />
<rect x="955.5" y="350.5" width="31" height="6" fill="#000" stroke="#000" stroke-width="1" />
<text x="971.2" y="356.2" font-size="7.5" fill="#fff" text-anchor="middle" font-weight="bold" font-family="'Liberation Mono', sans-serif" textLength="21" lengthAdjust="spacingAndGlyphs">PCAN</text>
<text x="971.3" y="372" font-size="7.5" fill="#000" text-anchor="middle" font-weight="normal" font-family="'Liberation Mono', sans-serif" textLength="25" lengthAdjust="spacingAndGlyphs" stroke="#000" stroke-width="0.25">CLOSE</text>
<rect x="706.5" y="350.5" width="31" height="31" fill="#fff" stroke="#000" stroke-width="1" />
<rect x="706.5" y="350.5" width="31" height="8" fill="#3c9cff" stroke="#000" stroke-width="1" />
<text x="722" y="357.3" font-size="7.5" fill="#000" text-anchor="middle" font-weight="bold" font-family="'Liberation Mono', sans-serif" textLength="12.5" lengthAdjust="spacingAndGlyphs">TBM</text>
<text x="722.2" y="373" font-size="7.5" fill="#000" text-anchor="middle" font-weight="normal" font-family="'Liberation Mono', sans-serif" textLength="20.5" lengthAdjust="spacingAndGlyphs" stroke="#000" stroke-width="0.25">FILTER</text>
<rect x="576.5" y="225.5" width="31" height="24" fill="#fff" stroke="#000" stroke-width="1" />
<rect x="577" y="226" width="15" height="23" fill="#ffffcc" />
<rect x="592" y="225" width="1" height="25" fill="#000" />
<path d="M577 236.300H583.500V234L587.200 237.500L583.500 241V238.700H577Z" fill="#000" shape-rendering="auto"/>
<rect x="593" y="233" width="14" height="1" fill="#000" />
<rect x="593" y="241" width="14" height="1" fill="#000" />
<text x="594.3" y="231.7" font-size="7" fill="#007f00" text-anchor="start" font-weight="bold" font-family="'Liberation Sans', sans-serif" textLength="10.5" lengthAdjust="spacing" stroke="#007f00" stroke-width="0.3">TF</text>
<text x="594.3" y="239.7" font-size="7" fill="#007f00" text-anchor="start" font-weight="bold" font-family="'Liberation Sans', sans-serif" textLength="10.5" lengthAdjust="spacing" stroke="#007f00" stroke-width="0.3">TF</text>
<text x="593.4" y="247.6" font-size="7.5" fill="#ff00ff" text-anchor="start" font-weight="bold" font-family="'Liberation Mono', sans-serif" textLength="13" lengthAdjust="spacingAndGlyphs">abc</text>
<path d="M628.500 225.500H641.500L645.500 227.800L649.500 233L645.500 238.200L641.500 240.500H628.500L631 237.500Q632.800 233 631 228.500Z" fill="#ffffcc" stroke="#000" shape-rendering="auto"/>
<text x="638.7" y="236.7" font-size="9.5" fill="#000" text-anchor="middle" font-weight="bold" font-family="'Liberation Sans', sans-serif" stroke="#000" stroke-width="0.4">V</text>
<rect x="816" y="480" width="16" height="16" fill="#ffffcc" />
<rect x="816.75" y="480.75" width="14.5" height="14.5" fill="none" stroke="#008000" stroke-width="1.25" shape-rendering="auto"/>
<path d="M821.63906 482.3H826.36094L829.7 485.63906V490.36094L826.36094 493.7H821.63906L818.3 490.36094V485.63906Z" fill="none" stroke="#000" stroke-width="1" shape-rendering="auto"/>
<path d="M822.30178 483.9H825.69822L828.1 486.30178V489.69822L825.69822 492.1H822.30178L819.9 489.69822V486.30178Z" fill="#ff0000" shape-rendering="auto"/>
<rect x="887" y="496" width="16" height="16" fill="#ffffcc" />
<rect x="887.75" y="496.75" width="14.5" height="14.5" fill="none" stroke="#008000" stroke-width="1.25" shape-rendering="auto"/>
<path d="M892.63906 498.3H897.36094L900.7 501.63906V506.36094L897.36094 509.7H892.63906L889.3 506.36094V501.63906Z" fill="none" stroke="#000" stroke-width="1" shape-rendering="auto"/>
<path d="M893.30178 499.9H896.69822L899.1 502.30178V505.69822L896.69822 508.1H893.30178L890.9 505.69822V502.30178Z" fill="#ff0000" shape-rendering="auto"/>
<text x="1004.6" y="365.8" font-size="12" fill="#000" text-anchor="start" font-weight="normal" font-family="'Liberation Sans', sans-serif" textLength="45" lengthAdjust="spacingAndGlyphs">error out</text>
<rect x="1003.5" y="370.5" width="31" height="15" fill="#fff" stroke="#808000" stroke-width="1" />
<rect x="1006.5" y="373.5" width="25" height="9" fill="#fff" stroke="#808000" stroke-width="1" />
<rect x="1004" y="372" width="9" height="12" fill="#d4d4a4" />
<rect x="1006" y="373" width="7" height="1" fill="#808000" />
<rect x="1006" y="382" width="7" height="1" fill="#808000" />
<rect x="1006" y="373" width="1" height="10" fill="#808000" />
<path d="M1007 375.0L1010.2 378.0L1007 381.0Z" fill="#000" shape-rendering="auto"/>
<rect x="1013.5" y="375.5" width="3.5" height="2" fill="none" stroke="#808000" stroke-width="1" shape-rendering="auto"/>
<rect x="1020" y="375" width="3" height="1" fill="#808000" />
<rect x="1025" y="374" width="2" height="2" fill="#808000" />
<rect x="1012" y="379" width="3" height="2" fill="#808000" />
<rect x="1018" y="378" width="4" height="3" fill="#808000" />
<rect x="1025.5" y="378.5" width="2.5" height="2.5" fill="none" stroke="#808000" stroke-width="1" shape-rendering="auto"/>
</svg>
</body></html>
